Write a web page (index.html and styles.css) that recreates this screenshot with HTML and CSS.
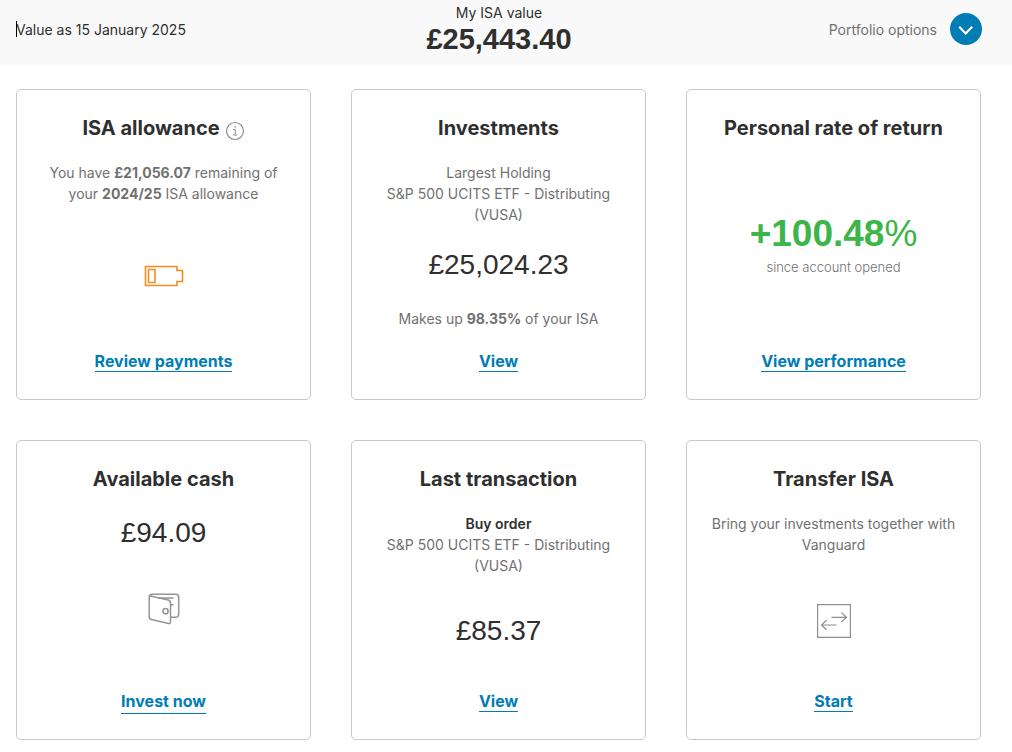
FILE: index.html
```html
<!DOCTYPE html>
<html lang="en">
<head>
<meta charset="utf-8">
<meta name="viewport" content="width=device-width, initial-scale=1">
<title>My ISA</title>
<link rel="stylesheet" href="styles.css">
</head>
<body>
<header class="summary">
  <p class="summary-date">Value as 15 January 2025</p>
  <div class="summary-value">
    <p class="summary-label">My ISA value</p>
    <p class="summary-total">£25,443.40</p>
  </div>
  <button class="options" type="button">
    <span>Portfolio options</span>
    <svg class="options-icon" viewBox="0 0 32 32" width="32" height="32" aria-hidden="true">
      <circle cx="16" cy="16" r="16" fill="#007db5"/>
      <path d="M9.200 13.700l6.500 6.700 6.500-6.700" fill="none" stroke="#fff" stroke-width="2.200"/>
    </svg>
  </button>
</header>
<main class="cards">
  <section class="card">
    <div class="card-heading">
      <h2 class="card-title">ISA allowance</h2>
      <button class="info" type="button" aria-label="About your ISA allowance">
        <svg viewBox="0 0 20 20" width="20" height="20" fill="none" stroke="#8c8c8c" aria-hidden="true">
          <circle cx="10" cy="10" r="8.5" stroke-width="1.2"/>
          <path d="M8 8.5h2.3v5.3M8 14h4.4"/>
          <path d="M9.4 5.8h1.4" stroke-width="1.4"/>
        </svg>
      </button>
    </div>
    <p class="card-text">You have <b>£21,056.07</b> remaining of<br>your <b>2024/25</b> ISA allowance</p>
    <svg class="card-icon" viewBox="0 0 40 22" width="40" height="22" fill="none" stroke="#f68b1f" stroke-width="1.6" aria-hidden="true">
      <path d="M1.5 1.5H33v4h5.5v11H33v4H1.5z"/>
      <path d="M4.500 4.500h6.500v13H4.500z"/>
    </svg>
    <a class="card-link" href="#payments">Review payments</a>
  </section>

  <section class="card">
    <h2 class="card-title">Investments</h2>
    <p class="card-text">Largest Holding<br>S&amp;P 500 UCITS ETF - Distributing<br>(VUSA)</p>
    <p class="amount">£25,024.23</p>
    <p class="card-note">Makes up <b>98.35%</b> of your ISA</p>
    <a class="card-link" href="#investments">View</a>
  </section>

  <section class="card">
    <h2 class="card-title">Personal rate of return</h2>
    <div class="return">
      <p class="return-value">+100.48<span class="return-unit">%</span></p>
      <p class="return-note">since account opened</p>
    </div>
    <a class="card-link" href="#performance">View performance</a>
  </section>

  <section class="card card-cash">
    <h2 class="card-title">Available cash</h2>
    <p class="amount cash-amount">£94.09</p>
    <svg class="card-icon wallet" viewBox="0 0 32 32" width="32" height="32" fill="none" stroke="#949494" stroke-width="1.5" stroke-linejoin="round" aria-hidden="true">
      <path d="M22.5 24.3h5.2a3 3 0 0 0 3-3V4.200a3 3 0 0 0-3-3H4.200A3 3 0 0 0 1.200 4.200v19.500a3 3 0 0 0 2.300 2.900L20.500 30.500q2 .4 2-1.600V9.800q0-2.200-2.200-2.800L3.500 3.300q-1.200-.2-1.700-.8"/>
      <path d="M10 5h15.500M22.500 11.800h3"/>
      <circle cx="17.500" cy="18.200" r="2.600"/>
    </svg>
    <a class="card-link link-spaced" href="#invest">Invest now</a>
  </section>

  <section class="card">
    <h2 class="card-title">Last transaction</h2>
    <p class="card-text"><strong class="order-type">Buy order</strong><br>S&amp;P 500 UCITS ETF - Distributing<br>(VUSA)</p>
    <p class="amount order-amount">£85.37</p>
    <a class="card-link" href="#transactions">View</a>
  </section>

  <section class="card">
    <h2 class="card-title">Transfer ISA</h2>
    <p class="card-text">Bring your investments together with<br>Vanguard</p>
    <svg class="card-icon" viewBox="0 0 34 34" width="34" height="34" fill="none" stroke="#8f8f8f" stroke-width="1.2" aria-hidden="true">
      <path d="M.6.6h32.800v32.800H.6z"/>
      <path d="M14.500 13.300h15M24.500 8.600l5 4.700-5 4.700M19.500 21H4.500M9.500 16.300L4.500 21l5 4.700"/>
    </svg>
    <a class="card-link" href="#transfer">Start</a>
  </section>
</main>
</body>
</html>
```
FILE: styles.css
```css
* {
  box-sizing: border-box;
}

body {
  margin: 0;
  background: #fff;
  color: #2f2f2f;
  font: 14px/21px Inter, "Liberation Sans", sans-serif;
}

p,
h2 {
  margin: 0;
}

button {
  padding: 0;
  border: 0;
  background: none;
  color: inherit;
  font: inherit;
  cursor: pointer;
}

.summary {
  display: grid;
  grid-template-columns: 1fr auto 1fr;
  align-items: center;
  padding: 3px 30px 10px 16px;
  background: #f9f9f9;
}

.summary-date {
  position: relative;
}

.summary-date::before {
  position: absolute;
  top: 2px;
  left: 0;
  width: 1px;
  height: 16px;
  background: #000;
  content: "";
}

.summary-value {
  text-align: center;
}

.summary-label {
  line-height: 20px;
}

.summary-total,
.amount,
.return-value {
  font-family: "Liberation Sans", Arial, sans-serif;
}

.summary-total {
  font-size: 29px;
  font-weight: 700;
  line-height: 32px;
}

.options {
  display: flex;
  align-items: center;
  justify-self: end;
  gap: 13px;
  color: #717171;
}

.options-icon {
  display: block;
}

.cards {
  display: grid;
  grid-template-columns: repeat(3, minmax(0, 1fr));
  gap: 40px;
  padding: 24px 31px 12px 16px;
}

.card {
  display: flex;
  flex-direction: column;
  align-items: center;
  min-height: 300px;
  padding: 24px 16px 27px;
  border: 1px solid #c8c8c8;
  border-radius: 5px;
  text-align: center;
}

.card-cash {
  padding-bottom: 25px;
}

.card-heading {
  display: flex;
  align-items: center;
  gap: 5px;
}

.card-title {
  font-size: 20px;
  font-weight: 700;
  line-height: 28px;
}

.info {
  display: block;
  height: 20px;
  margin-top: 6px;
}

.card-text {
  margin-top: 20px;
  color: #717171;
}

.card-text b,
.card-note b {
  font-weight: 700;
}

.order-type {
  color: #2f2f2f;
  font-weight: 600;
}

.card-icon {
  display: block;
  margin: auto 0;
}

.amount {
  margin-top: 22px;
  font-size: 28px;
  line-height: 36px;
}

.card-note {
  margin: 25px 0 18px;
  color: #717171;
}

.return {
  margin: auto 0;
}

.return-value {
  color: #3cb54a;
  font-size: 37px;
  font-weight: 700;
  line-height: 46px;
}

.return-unit {
  font-weight: 400;
}

.return-note {
  color: #717171;
  font-size: 13px;
  font-weight: 300;
}

.cash-amount {
  margin-top: 22px;
}

.wallet {
  margin-top: 42px;
}

.order-amount {
  margin-top: 37px;
  margin-bottom: auto;
}

.card-link {
  margin-top: 4px;
  border-bottom: 1px solid #007db5;
  color: #007db5;
  font-size: 16px;
  font-weight: 700;
  line-height: 20px;
  text-decoration: none;
}

.link-spaced {
  padding-bottom: 2px;
}
```
